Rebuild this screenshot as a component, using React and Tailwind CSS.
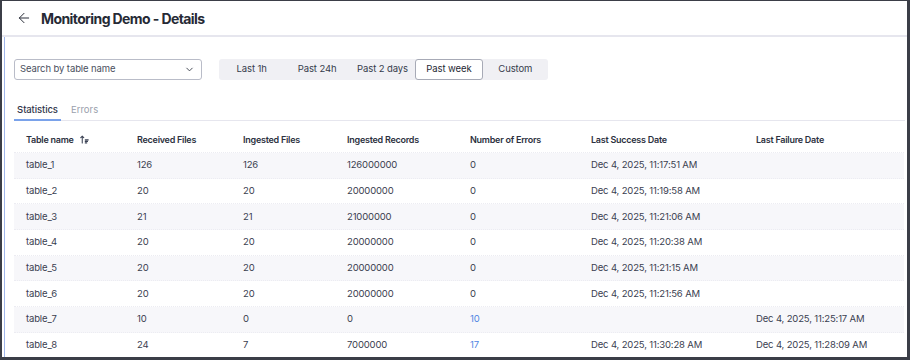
import { ArrowLeft, ChevronDown } from 'lucide-react'

const ranges = ['Last 1h', 'Past 24h', 'Past 2 days', 'Past week', 'Custom']

const rows = [
  ['table_1', '126', '126', '126000000', '0', 'Dec 4, 2025, 11:17:51 AM', ''],
  ['table_2', '20', '20', '20000000', '0', 'Dec 4, 2025, 11:19:58 AM', ''],
  ['table_3', '21', '21', '21000000', '0', 'Dec 4, 2025, 11:21:06 AM', ''],
  ['table_4', '20', '20', '20000000', '0', 'Dec 4, 2025, 11:20:38 AM', ''],
  ['table_5', '20', '20', '20000000', '0', 'Dec 4, 2025, 11:21:15 AM', ''],
  ['table_6', '20', '20', '20000000', '0', 'Dec 4, 2025, 11:21:56 AM', ''],
  ['table_7', '10', '0', '0', '10', '', 'Dec 4, 2025, 11:25:17 AM'],
  ['table_8', '24', '7', '7000000', '17', 'Dec 4, 2025, 11:30:28 AM', 'Dec 4, 2025, 11:28:09 AM'],
]

// column widths, taken from where each header starts
const cols = ['w-[111px]', 'w-[106px]', 'w-[104px]', 'w-[123px]', 'w-[121px]', 'w-[165px]', 'flex-1']

function SortIcon() {
  return (
    <svg width="9" height="9" viewBox="0 0 12 12" fill="none" stroke="#3b4254" strokeWidth="1.4" strokeLinecap="round">
      <path d="M3 10.5V1.5M1 3.5l2-2 2 2" />
      <path d="M7 6.5h4M7 8.5h3M7 10.5h2" />
    </svg>
  )
}

export default function App() {
  return (
    <div className="w-[910px] h-[360px] bg-[#3b3e47] pt-px pl-[2px] pr-[3px] pb-[3px] font-['Inter',sans-serif] text-[#363c4c]">
      <div className="h-full bg-white flex flex-col overflow-hidden">
        {/* Header */}
        <div className="h-[36px] shrink-0 flex items-center gap-[9px] pl-[14px] border-b-2 border-[#e6e6ee]">
          <ArrowLeft className="w-[16px] h-[16px] text-[#2b2f3a]" strokeWidth={1.5} />
          <h1 className="text-[14px] font-bold text-[#262a35] tracking-[-0.6px]">Monitoring Demo - Details</h1>
        </div>

        {/* Body */}
        <div className="flex-1 ml-[2px] border-l border-[#9fb5ea] pl-[9px] pr-[2px] flex flex-col">
          {/* Filters */}
          <div className="flex items-center gap-[17px] mt-[22px]">
            <div className="w-[188px] h-[21px] border border-[#b9bcc8] rounded-[3px] flex items-center justify-between pl-[5px] pr-[6px]">
              <span className="text-[9.5px] text-[#4a5060] tracking-[-0.1px]">Search by table name</span>
              <ChevronDown className="w-[11px] h-[11px] text-[#3a3f4c]" strokeWidth={2} />
            </div>
            <div className="h-[21px] bg-[#f0f0f4] rounded-[3px] flex items-center w-[329px]">
              {ranges.map((r) => (
                <div
                  key={r}
                  className={`h-[21px] flex-1 flex items-center justify-center text-[9.5px] tracking-[-0.1px] ${
                    r === 'Past week'
                      ? 'bg-white border border-[#a7aab6] rounded-[3px] text-[#262a35]'
                      : 'text-[#363c4c]'
                  }`}
                >
                  {r}
                </div>
              ))}
            </div>
          </div>

          {/* Tabs */}
          <div className="mt-[24px] flex border-b border-[#e6e6ee]">
            <div className="w-[47px] flex justify-center leading-[12px] pb-[3px] border-b-2 border-[#7aa2ea] -mb-px text-[9.5px] font-medium text-[#30354a] tracking-[-0.1px]">
              Statistics
            </div>
            <div className="ml-[10px] leading-[12px] pb-[3px] text-[9.5px] text-[#9a9fad]">Errors</div>
          </div>

          {/* Table */}
          <div className="mt-[6px] mr-[1px]">
            <div className="h-[26px] flex items-center text-[9px] font-semibold text-[#2c3140] tracking-[-0.25px] border-b border-dotted border-[#ececf2]">
              {['Table name', 'Received Files', 'Ingested Files', 'Ingested Records', 'Number of Errors', 'Last Success Date', 'Last Failure Date'].map((h, i) => (
                <div key={h} className={`${cols[i]} pl-[12px] flex items-center gap-[6px]`}>
                  {h}
                  {i === 0 && <SortIcon />}
                </div>
              ))}
            </div>
            {rows.map((row, ri) => (
              <div
                key={row[0]}
                className={`h-[25.7px] flex items-center text-[9.5px] tracking-[-0.15px] border-b border-dotted border-[#ececf2] ${
                  ri % 2 === 0 ? 'bg-[#f7f7fa]' : 'bg-white'
                }`}
              >
                {row.map((c, ci) => (
                  <div
                    key={ci}
                    className={`${cols[ci]} pl-[12px] ${ci === 4 && c !== '0' ? 'text-[#4f86e3]' : 'text-[#3a4050]'}`}
                  >
                    {c}
                  </div>
                ))}
              </div>
            ))}
          </div>
        </div>
      </div>
    </div>
  )
}
